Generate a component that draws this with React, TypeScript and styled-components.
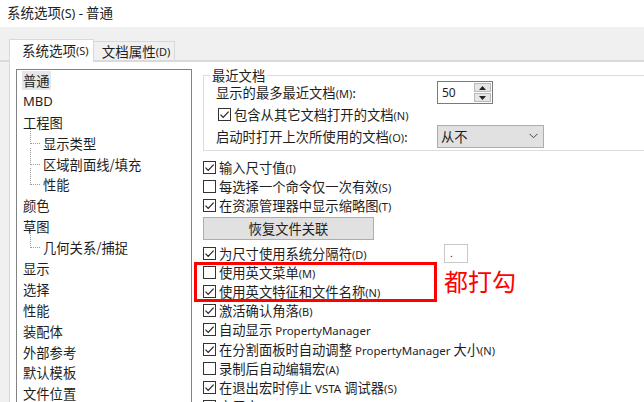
import React from "react";
import styled, { createGlobalStyle } from "styled-components";

const GlobalStyle = createGlobalStyle`
  html, body {
    margin: 0;
    padding: 0;
    background: #ffffff;
  }
  body {
    font-family: "Noto Sans CJK SC", "Noto Sans", sans-serif;
    color: #1e1e1e;
  }
`;

const Window = styled.div`
  width: 644px;
  height: 402px;
  overflow: hidden;
  display: flex;
  flex-direction: column;
  background: #f0f0f0;
`;

const TitleBar = styled.div`
  height: 27px;
  flex: none;
  padding-left: 7px;
  line-height: 25px;
  font-size: 13.5px;
  background: #ffffff;
  color: #222;
`;

const TabStrip = styled.div`
  height: 33px;
  flex: none;
  display: flex;
  align-items: flex-end;
  padding-left: 9px;
  border-bottom: 2px solid #dadada;
`;

const Tab = styled.div<{ $active?: boolean }>`
  box-sizing: border-box;
  display: flex;
  align-items: center;
  height: ${(p) => (p.$active ? "23px" : "19px")};
  margin-bottom: ${(p) => (p.$active ? "-2px" : "0")};
  padding: ${(p) => (p.$active ? "0 4px 2px 12px" : "0 4px 0 8px")};
  background: ${(p) => (p.$active ? "#ffffff" : "#f0f0f0")};
  border: 1px solid #d9d9d9;
  border-bottom: none;
  border-left: ${(p) => (p.$active ? "1px solid #d9d9d9" : "none")};
  font-size: 13.5px;
  white-space: nowrap;
`;

const Key = styled.span`
  font-family: "Noto Sans", sans-serif;
  font-size: 11px;
`;

const Latin = styled.span<{ $size?: number }>`
  font-family: "Noto Sans", sans-serif;
  font-size: ${(p) => p.$size ?? 11.5}px;
`;

const TabPage = styled.div`
  flex: 1;
  display: flex;
  align-items: flex-start;
  margin-left: 9px;
  background: #ffffff;
  border-left: 1px solid #d9d9d9;
  min-height: 0;
`;

const Tree = styled.ul`
  list-style: none;
  margin: 7px 0 0 6px;
  padding: 0 0 0 4px;
  width: 176px;
  height: 360px;
  box-sizing: border-box;
  border: 1px solid #828282;
  flex: none;
`;

const TreeItem = styled.li<{ $child?: boolean }>`
  position: relative;
  height: 20.9px;
  display: flex;
  align-items: center;
  padding-left: ${(p) => (p.$child ? "21px" : "1px")};
  font-size: 13.3px;
  white-space: nowrap;

  &::before {
    content: "";
    display: ${(p) => (p.$child ? "block" : "none")};
    position: absolute;
    left: 9px;
    top: -6px;
    width: 9px;
    height: 16px;
    border-left: 1px dotted #9a9a9a;
    border-bottom: 1px dotted #9a9a9a;
  }
`;

const ItemLabel = styled.span<{ $selected?: boolean }>`
  padding: 0 1px;
  line-height: 19px;
  background: ${(p) => (p.$selected ? "#e6e6e6" : "transparent")};
`;

const Options = styled.div`
  margin: 13px 0 0 11px;
  display: flex;
  flex-direction: column;
  font-size: 13.3px;
  white-space: nowrap;
`;

const GroupBox = styled.div`
  width: 460px;
  border: 1px solid #dcdcdc;
  padding: 0 0 2px 12px;
`;

const Legend = styled.div`
  width: fit-content;
  margin: -7px 0 0 -6px;
  padding: 0 2px;
  background: #ffffff;
  line-height: 13px;
`;

const FieldRow = styled.div<{ $height: number }>`
  display: grid;
  grid-template-columns: 221px auto;
  align-items: center;
  height: ${(p) => p.$height}px;
`;

const Spinner = styled.div`
  display: flex;
  width: 56px;
  height: 23px;
  box-sizing: border-box;
  border: 1px solid #7a7a7a;
  background: #ffffff;
`;

const SpinValue = styled.div`
  flex: 1;
  padding-left: 4px;
  line-height: 21px;
  font-family: "Noto Sans", sans-serif;
  font-size: 12px;
`;

const SpinButtons = styled.div`
  width: 17px;
  display: flex;
  flex-direction: column;
  gap: 1px;
  padding: 1px 1px 1px 0;
`;

const SpinButton = styled.div`
  flex: 1;
  display: flex;
  align-items: center;
  justify-content: center;
  background: #e6e6e6;
  border: 1px solid #b9b9b9;
`;

const Select = styled.div`
  display: flex;
  align-items: center;
  justify-content: space-between;
  width: 107px;
  height: 23px;
  box-sizing: border-box;
  padding: 0 5px 0 3px;
  background: #e1e1e1;
  border: 1px solid #adadad;
`;

const CheckRow = styled.div<{ $inset?: number }>`
  display: flex;
  align-items: center;
  gap: 3px;
  height: 19.2px;
  margin-left: ${(p) => p.$inset ?? 0}px;
`;

const BoxMark = styled.span`
  flex: none;
  width: 13px;
  height: 13px;
  box-sizing: border-box;
  border: 1px solid #333333;
  background: #ffffff;
  display: inline-flex;
  align-items: center;
  justify-content: center;
`;

const CheckList = styled.div`
  margin-top: 7px;
  display: flex;
  flex-direction: column;
`;

const PushButton = styled.div`
  width: 171px;
  height: 23px;
  box-sizing: border-box;
  margin: 1px 0 4px;
  display: flex;
  align-items: center;
  justify-content: center;
  background: #e1e1e1;
  border: 1px solid #adadad;
`;

const SepRow = styled.div`
  display: grid;
  grid-template-columns: 241px auto;
  align-items: center;
  height: 19.2px;
`;

const SepInput = styled.div`
  width: 24px;
  height: 19px;
  box-sizing: border-box;
  border: 1px solid #c8c8c8;
  padding-left: 5px;
  font-size: 10px;
  line-height: 15px;
`;

const Highlight = styled.div`
  position: relative;
  width: 234px;

  &::after {
    content: "";
    position: absolute;
    left: -9px;
    right: 0;
    top: -1px;
    bottom: -1px;
    border: 3px solid #ff0000;
    pointer-events: none;
  }
`;

const Note = styled.div`
  position: absolute;
  left: 241px;
  top: 3px;
  color: #ff0000;
  font-size: 24px;
  line-height: 30px;
`;

const Check = ({ checked }: { checked?: boolean }) => (
  <BoxMark>
    {checked && (
      <svg width="11" height="11" viewBox="0 0 11 11">
        <polyline
          points="1.5,5.6 4.2,8.3 9.6,2.6"
          fill="none"
          stroke="#222"
          strokeWidth="1.2"
        />
      </svg>
    )}
  </BoxMark>
);

const Option = ({
  checked,
  children,
  inset,
}: {
  checked?: boolean;
  children: React.ReactNode;
  inset?: number;
}) => (
  <CheckRow $inset={inset}>
    <Check checked={checked} />
    <span>{children}</span>
  </CheckRow>
);

const treeItems: { label: React.ReactNode; child?: boolean; selected?: boolean }[] = [
  { label: "普通", selected: true },
  { label: <Latin $size={13}>MBD</Latin> },
  { label: "工程图" },
  { label: "显示类型", child: true },
  { label: "区域剖面线/填充", child: true },
  { label: "性能", child: true },
  { label: "颜色" },
  { label: "草图" },
  { label: "几何关系/捕捉", child: true },
  { label: "显示" },
  { label: "选择" },
  { label: "性能" },
  { label: "装配体" },
  { label: "外部参考" },
  { label: "默认模板" },
  { label: "文件位置" },
];

const App: React.FC = () => {
  return (
    <>
      <GlobalStyle />
      <Window>
        <TitleBar>
          系统选项<Latin $size={12.5}>(S)</Latin> - 普通
        </TitleBar>
        <TabStrip>
          <Tab $active>
            系统选项<Key>(S)</Key>
          </Tab>
          <Tab>
            文档属性<Key>(D)</Key>
          </Tab>
        </TabStrip>
        <TabPage>
          <Tree>
            {treeItems.map((item, i) => (
              <TreeItem key={i} $child={item.child}>
                <ItemLabel $selected={item.selected}>{item.label}</ItemLabel>
              </TreeItem>
            ))}
          </Tree>
          <Options>
            <GroupBox>
              <Legend>最近文档</Legend>
              <FieldRow $height={23} style={{ marginTop: -1 }}>
                <span>
                  显示的最多最近文档<Key>(M)</Key>:
                </span>
                <Spinner>
                  <SpinValue>50</SpinValue>
                  <SpinButtons>
                    <SpinButton>
                      <svg width="7" height="4" viewBox="0 0 7 4">
                        <polygon points="0,4 3.5,0 7,4" fill="#222" />
                      </svg>
                    </SpinButton>
                    <SpinButton>
                      <svg width="7" height="4" viewBox="0 0 7 4">
                        <polygon points="0,0 3.5,4 7,0" fill="#222" />
                      </svg>
                    </SpinButton>
                  </SpinButtons>
                </Spinner>
              </FieldRow>
              <CheckRow $inset={2} style={{ height: 20 }}>
                <Check checked />
                <span>
                  包含从其它文档打开的文档<Key>(N)</Key>
                </span>
              </CheckRow>
              <FieldRow $height={24}>
                <span>
                  启动时打开上次所使用的文档<Key>(O)</Key>:
                </span>
                <Select>
                  <span>从不</span>
                  <svg width="9" height="6" viewBox="0 0 9 6">
                    <polyline points="0.5,0.8 4.5,4.8 8.5,0.8" fill="none" stroke="#444" strokeWidth="1" />
                  </svg>
                </Select>
              </FieldRow>
            </GroupBox>
            <CheckList>
              <Option checked>
                输入尺寸值<Key>(I)</Key>
              </Option>
              <Option>
                每选择一个命令仅一次有效<Key>(S)</Key>
              </Option>
              <Option checked>
                在资源管理器中显示缩略图<Key>(T)</Key>
              </Option>
              <PushButton>恢复文件关联</PushButton>
              <SepRow>
                <CheckRow>
                  <Check checked />
                  <span>
                    为尺寸使用系统分隔符<Key>(D)</Key>
                  </span>
                </CheckRow>
                <SepInput>.</SepInput>
              </SepRow>
              <Highlight>
                <Option>
                  使用英文菜单<Key>(M)</Key>
                </Option>
                <Option checked>
                  使用英文特征和文件名称<Key>(N)</Key>
                </Option>
                <Note>都打勾</Note>
              </Highlight>
              <Option checked>
                激活确认角落<Key>(B)</Key>
              </Option>
              <Option checked>
                自动显示 <Latin>PropertyManager</Latin>
              </Option>
              <Option checked>
                在分割面板时自动调整 <Latin>PropertyManager</Latin> 大小<Key>(N)</Key>
              </Option>
              <Option>
                录制后自动编辑宏<Key>(A)</Key>
              </Option>
              <Option checked>
                在退出宏时停止 <Latin>VSTA</Latin> 调试器<Key>(S)</Key>
              </Option>
              <Option checked>启用宏</Option>
            </CheckList>
          </Options>
        </TabPage>
      </Window>
    </>
  );
};

export default App;
